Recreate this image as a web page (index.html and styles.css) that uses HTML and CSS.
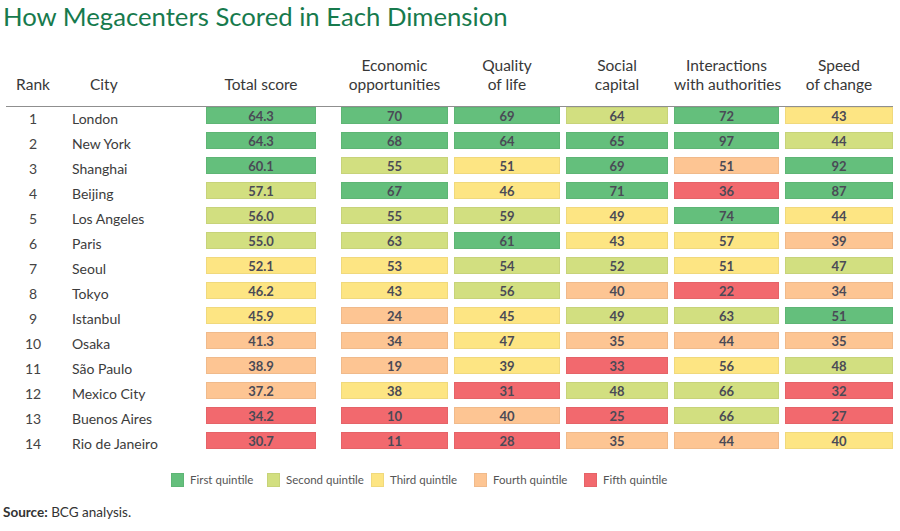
FILE: index.html
```html
<!DOCTYPE html>
<html lang="en">
<head>
<meta charset="utf-8">
<title>How Megacenters Scored in Each Dimension</title>
<link rel="stylesheet" href="styles.css">
</head>
<body>
<h1 class="title">How Megacenters Scored in Each Dimension</h1>
<div class="table">
  <div class="row head">
    <div class="h-rank">Rank</div>
    <div class="h-city">City</div>
    <div class="h total">Total score</div>
    <div class="h">Economic<br>opportunities</div>
    <div class="h">Quality<br>of life</div>
    <div class="h">Social<br>capital</div>
    <div class="h">Interactions<br>with authorities</div>
    <div class="h">Speed<br>of change</div>
  </div>
  <div class="row"><div class="rank">1</div><div class="city">London</div><div class="cell total q1">64.3</div><div class="cell q1">70</div><div class="cell q1">69</div><div class="cell q2">64</div><div class="cell q1">72</div><div class="cell q3">43</div></div>
  <div class="row"><div class="rank">2</div><div class="city">New York</div><div class="cell total q1">64.3</div><div class="cell q1">68</div><div class="cell q1">64</div><div class="cell q1">65</div><div class="cell q1">97</div><div class="cell q2">44</div></div>
  <div class="row"><div class="rank">3</div><div class="city">Shanghai</div><div class="cell total q1">60.1</div><div class="cell q2">55</div><div class="cell q3">51</div><div class="cell q1">69</div><div class="cell q4">51</div><div class="cell q1">92</div></div>
  <div class="row"><div class="rank">4</div><div class="city">Beijing</div><div class="cell total q2">57.1</div><div class="cell q1">67</div><div class="cell q3">46</div><div class="cell q1">71</div><div class="cell q5">36</div><div class="cell q1">87</div></div>
  <div class="row"><div class="rank">5</div><div class="city">Los Angeles</div><div class="cell total q2">56.0</div><div class="cell q2">55</div><div class="cell q2">59</div><div class="cell q3">49</div><div class="cell q1">74</div><div class="cell q3">44</div></div>
  <div class="row"><div class="rank">6</div><div class="city">Paris</div><div class="cell total q2">55.0</div><div class="cell q2">63</div><div class="cell q1">61</div><div class="cell q3">43</div><div class="cell q3">57</div><div class="cell q4">39</div></div>
  <div class="row"><div class="rank">7</div><div class="city">Seoul</div><div class="cell total q3">52.1</div><div class="cell q3">53</div><div class="cell q2">54</div><div class="cell q2">52</div><div class="cell q3">51</div><div class="cell q2">47</div></div>
  <div class="row"><div class="rank">8</div><div class="city">Tokyo</div><div class="cell total q3">46.2</div><div class="cell q3">43</div><div class="cell q2">56</div><div class="cell q4">40</div><div class="cell q5">22</div><div class="cell q4">34</div></div>
  <div class="row"><div class="rank">9</div><div class="city">Istanbul</div><div class="cell total q3">45.9</div><div class="cell q4">24</div><div class="cell q3">45</div><div class="cell q2">49</div><div class="cell q2">63</div><div class="cell q1">51</div></div>
  <div class="row"><div class="rank">10</div><div class="city">Osaka</div><div class="cell total q4">41.3</div><div class="cell q4">34</div><div class="cell q3">47</div><div class="cell q4">35</div><div class="cell q4">44</div><div class="cell q4">35</div></div>
  <div class="row"><div class="rank">11</div><div class="city">São Paulo</div><div class="cell total q4">38.9</div><div class="cell q4">19</div><div class="cell q3">39</div><div class="cell q5">33</div><div class="cell q3">56</div><div class="cell q2">48</div></div>
  <div class="row"><div class="rank">12</div><div class="city">Mexico City</div><div class="cell total q4">37.2</div><div class="cell q3">38</div><div class="cell q5">31</div><div class="cell q2">48</div><div class="cell q2">66</div><div class="cell q5">32</div></div>
  <div class="row"><div class="rank">13</div><div class="city">Buenos Aires</div><div class="cell total q5">34.2</div><div class="cell q5">10</div><div class="cell q4">40</div><div class="cell q5">25</div><div class="cell q2">66</div><div class="cell q5">27</div></div>
  <div class="row"><div class="rank">14</div><div class="city">Rio de Janeiro</div><div class="cell total q5">30.7</div><div class="cell q5">11</div><div class="cell q5">28</div><div class="cell q4">35</div><div class="cell q4">44</div><div class="cell q3">40</div></div>
</div>
<div class="legend">
  <div class="item"><span class="swatch q1"></span>First quintile</div>
  <div class="item"><span class="swatch q2"></span>Second quintile</div>
  <div class="item"><span class="swatch q3"></span>Third quintile</div>
  <div class="item"><span class="swatch q4"></span>Fourth quintile</div>
  <div class="item"><span class="swatch q5"></span>Fifth quintile</div>
</div>
<p class="source"><b>Source:</b> BCG analysis.</p>
</body>
</html>
```
FILE: styles.css
```css
* { box-sizing: border-box; }
body {
  margin: 0;
  background: #fff;
  font-family: Lato, "Liberation Sans", sans-serif;
  color: #3c3c3c;
}
.title {
  margin: 0;
  padding-left: 3px;
  font-size: 25.7px;
  line-height: 32px;
  font-weight: 400;
  color: #177a4d;
}
.table {
  margin-left: 6px;
  width: 887px;
}
.row {
  display: grid;
  grid-template-columns: 54px 134px 129px 107px 106px 102px 105px 108px;
  column-gap: 6px;
  height: 25px;
  align-items: start;
}
.row.head {
  margin-top: 24px;
  height: auto;
  align-items: end;
  padding-bottom: 12px;
  border-bottom: 1px solid #8f8f8f;
  font-size: 15.5px;
  line-height: 19px;
  color: #383838;
}
.h { text-align: center; white-space: nowrap; }
.h-rank { text-align: center; }
.h-city { padding-left: 24px; }
.total { margin-right: 19px; }
.rank {
  text-align: center;
  font-size: 14px;
  line-height: 18px;
  padding-top: 3px;
  color: #444;
}
.city {
  padding-left: 6px;
  font-size: 14px;
  line-height: 18px;
  padding-top: 3px;
  color: #3c3c3c;
}
.cell {
  height: 17px;
  text-align: center;
  font-size: 13px;
  font-weight: 700;
  line-height: 16px;
  color: #4a4a56;
  border: 1px solid rgba(0, 0, 0, 0.05);
}
.q1 { background: #64bf7c; }
.q2 { background: #d2df80; }
.q3 { background: #fde583; }
.q4 { background: #fdc593; }
.q5 { background: #f2696e; }
.legend {
  display: grid;
  grid-template-columns: 96px 104px 103px 110px auto;
  align-items: center;
  margin-top: 16px;
  padding-left: 171px;
  font-size: 11.5px;
  line-height: 14px;
  color: #555;
}
.item {
  display: flex;
  align-items: center;
  gap: 6px;
}
.swatch {
  width: 13px;
  height: 14px;
  display: inline-block;
  border: 1px solid rgba(0, 0, 0, 0.05);
}
.source {
  margin: 17px 0 0 3px;
  font-size: 13.5px;
  line-height: 16px;
  color: #333;
}
.source b { font-weight: 700; }
```
